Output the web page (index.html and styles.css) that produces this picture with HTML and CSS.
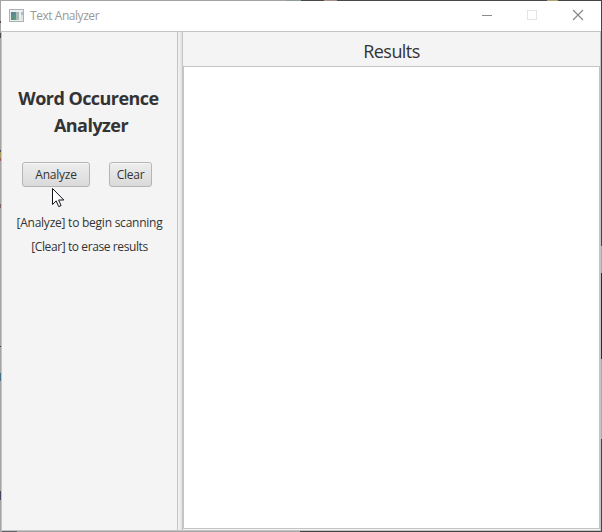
FILE: index.html
```html
<!DOCTYPE html>
<html lang="en">
<head>
<meta charset="utf-8">
<title>Text Analyzer</title>
<link rel="stylesheet" href="styles.css">
</head>
<body>
<div class="window">
  <header class="titlebar">
    <svg class="app-icon" width="16" height="14" viewBox="0 0 16 14" shape-rendering="crispEdges">
      <defs><linearGradient id="g" x1="0" y1="0" x2="1" y2="1"><stop offset="0" stop-color="#607b9c"/><stop offset="1" stop-color="#56a276"/></linearGradient></defs>
      <rect x=".5" y=".5" width="14" height="12" fill="#eceeee" stroke="#adb1b3"/>
      <rect x="2" y="3" width="5" height="8" fill="url(#g)"/>
      <rect x="7" y="3" width="3" height="8" fill="#a8b9b8"/>
      <rect x="12" y="3" width="2" height="3" fill="#a9bccb"/>
      <rect x="12" y="6" width="2" height="5" fill="#dce3df"/>
    </svg>
    <span class="caption">Text Analyzer</span>
    <svg class="controls" width="138" height="30" viewBox="0 0 138 30">
      <path d="M19 14.5h10" stroke="#8c8c8c"/>
      <rect x="64.5" y="9.5" width="9" height="9" fill="none" stroke="#e4e4e4"/>
      <path d="M110 9l10 10M120 9l-10 10" stroke="#858585" stroke-width="1.1"/>
    </svg>
  </header>
  <main class="split">
    <section class="side">
      <h1 class="heading"><span class="line">Word Occurence</span><span class="line second">Analyzer</span></h1>
      <div class="buttons">
        <button class="btn analyze"><span>Analyze</span></button>
        <button class="btn clear"><span>Clear</span></button>
      </div>
      <p class="hint begin">[Analyze] to begin scanning</p>
      <p class="hint erase">[Clear] to erase results</p>
    </section>
    <div class="divider"></div>
    <section class="results">
      <h2 class="results-title">Results</h2>
      <div class="output"></div>
    </section>
  </main>
</div>
<svg class="cursor" width="13" height="20" viewBox="0 0 13 20"><path d="M.5 .5v16l3.7-3.6 2.5 5.7 2.4-1-2.5-5.6h5.2z" fill="#fff" stroke="#14141f"/></svg>
</body>
</html>
```
FILE: styles.css
```css
* { box-sizing: border-box; }
/* The desktop shows as a one-pixel rim round the window. */
body {
  margin: 0;
  padding: 1px;
  width: 602px;
  height: 532px;
  overflow: hidden;
  font-family: "Open Sans", "Noto Sans", sans-serif;
  color: #333;
  background:
    linear-gradient(90deg, #a3a3a3 0 286px, #8f9b93 286px 301px, #4b484b 301px 324px, #a88f88 324px 337px, #4b484b 337px 547px, #b3a26d 547px 558px, #454545 558px) 0 0 / 602px 1px no-repeat,
    linear-gradient(#454545 0 246px, #b1b180 246px 273px, #2e2e2e 273px 359px, #acacac 359px 439px, #454545 439px) 601px 0 / 1px 532px no-repeat,
    linear-gradient(90deg, #a5a5a5 0 2px, #5c6266 2px 17px, #a5a5a5 17px 300px, #454545 300px) 0 531px / 602px 1px no-repeat,
    linear-gradient(#a5a5a5 0 21px, #4d4d50 21px 23px, #a5a5a5 23px 33px, #4d4d50 33px 38px, #a5a5a5 38px 150px, #56526a 150px 152px, #aa9b65 152px 158px, #a06058 158px 161px, #a5a5a5 161px 204px, #7e625f 204px 208px, #a5a5a5 208px 346px, #3c3c50 346px 347px, #a5a5a5 347px 373px, #46718f 373px 381px, #a5a5a5 381px 491px, #454860 491px 500px, #a5a5a5 500px) 0 0 / 1px 532px no-repeat;
}
h1, h2, p { margin: 0; }
.window {
  display: flex;
  flex-direction: column;
  width: 600px;
  height: 530px;
  background: #fff;
}
.titlebar {
  display: flex;
  align-items: flex-start;
  height: 30px;
}
.app-icon { margin: 8px 0 0 8px; }
.caption {
  flex: 1;
  padding: 6px 0 0 5px;
  font-size: 12px;
  line-height: 18px;
  letter-spacing: -0.45px;
  color: #999;
}
.split {
  display: flex;
  flex: 1;
  border: 1px solid #c4c4c4;
  background: #f4f4f4;
}
.side {
  display: flex;
  flex-direction: column;
  align-items: center;
  width: 175px;
  padding-top: 53px;
}
.heading {
  display: flex;
  flex-direction: column;
  align-items: center;
  font-size: 18px;
  line-height: 27px;
  font-weight: 700;
  white-space: nowrap;
}
.line {
  padding-right: 2px;
  letter-spacing: -0.55px;
}
.second { padding: 0 0 0 3px; }
.buttons {
  display: flex;
  gap: 19px;
  margin-top: 23px;
  padding-right: 5px;
}
.btn {
  height: 25px;
  padding: 0;
  border: 1px solid #b5b5b5;
  border-radius: 3px;
  background: linear-gradient(#ededed, #dadada);
  box-shadow: inset 0 1px #f7f7f7;
  color: #333;
  font: 12px/22px "Open Sans", "Noto Sans", sans-serif;
  letter-spacing: -0.25px;
}
.analyze { width: 68px; }
.clear { width: 43px; }
.hint {
  font-size: 12px;
  line-height: 24px;
  letter-spacing: -0.24px;
  white-space: nowrap;
}
.begin { margin-top: 24px; }
.erase { letter-spacing: -0.4px; }
.divider {
  width: 6px;
  border: 1px solid #c4c4c4;
  border-width: 0 1px;
  background: linear-gradient(90deg, #f3f3f3, #e2e2e2);
}
.results {
  display: flex;
  flex: 1;
  flex-direction: column;
}
.results-title {
  height: 34px;
  padding-top: 7px;
  font-size: 18px;
  line-height: 25px;
  font-weight: 400;
  letter-spacing: -0.55px;
  text-align: center;
}
.output {
  flex: 1;
  margin-bottom: 1px;
  border: 1px solid #c4c4c4;
  background: #fff;
}
.cursor {
  position: absolute;
  left: 52px;
  top: 188px;
}
```
